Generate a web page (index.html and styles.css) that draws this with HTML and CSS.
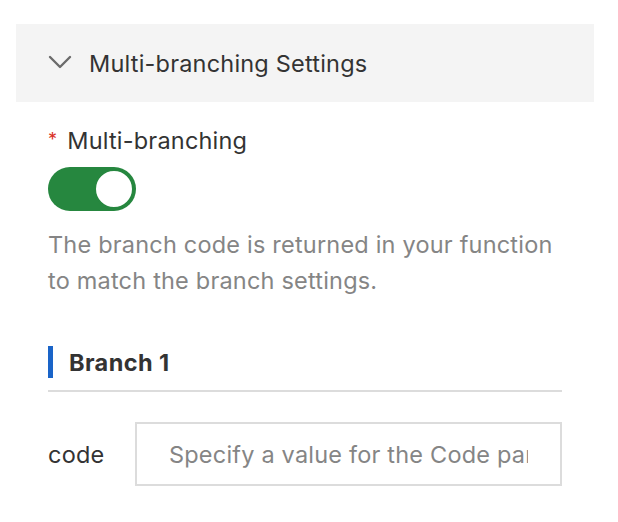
FILE: index.html
```html
<!DOCTYPE html>
<html>
<head>
<meta charset="utf-8">
<link rel="stylesheet" href="styles.css">
</head>
<body>
<div class="page">
  <div class="panel-header">
    <svg class="chevron" width="24" height="14" viewBox="0 0 24 14"><path d="M2 2 L12 12 L22 2" fill="none" stroke="#6b6b6b" stroke-width="2.4" stroke-linecap="round" stroke-linejoin="round"/></svg>
    <span class="panel-title">Multi-branching Settings</span>
  </div>
  <div class="panel-body">
    <div class="field-label"><span class="req">*</span>Multi-branching</div>
    <div class="switch"><div class="knob"></div></div>
    <p class="help">The branch code is returned in your function<br>to match the branch settings.</p>
    <div class="branch-head"><span class="bar"></span><span class="branch-title">Branch 1</span></div>
    <div class="divider"></div>
    <div class="code-row">
      <span class="code-label">code</span>
      <div class="input"><span class="placeholder">Specify a value for the Code parameter</span></div>
    </div>
  </div>
</div>
</body>
</html>
```
FILE: styles.css
```css
html, body { margin: 0; padding: 0; background: #fff; }
body { font-family: "Inter", "Roboto", "Liberation Sans", sans-serif; color: #333; letter-spacing: 0.2px; }
.page { padding: 24px 0 0 16px; width: 578px; }
.panel-header { height: 78px; background: #f4f4f4; display: flex; align-items: center; padding-left: 32px; }
.chevron { display: block; margin-right: 17px; margin-top: -2px; }
.panel-title { font-size: 23.5px; color: #333; }
.panel-body { padding: 0 32px; }
.field-label { margin-top: 24px; font-size: 23.5px; line-height: 28px; height: 28px; color: #333; }
.req { color: #d93026; margin-right: 10px; font-size: 18px; vertical-align: 3px; }
.switch { margin-top: 13px; width: 88px; height: 44px; border-radius: 22px; background: #26873f; position: relative; box-sizing: border-box; }
.knob { position: absolute; right: 2px; top: 2px; width: 40px; height: 40px; border-radius: 50%; background: #fff; box-sizing: border-box; border: 2px solid #26873f; }
.help { margin: 16px 0 0; font-size: 23.5px; line-height: 36px; color: #858585; }
.branch-head { margin-top: 47px; display: flex; align-items: center; height: 32px; }
.bar { width: 5px; height: 32px; background: #1a64c8; margin-right: 16px; }
.branch-title { font-size: 23.5px; font-weight: 700; color: #333; letter-spacing: 0.4px; }
.divider { margin-top: 12px; height: 2px; background: #dcdcdc; }
.code-row { margin-top: 30px; display: flex; align-items: center; }
.code-label { width: 87px; font-size: 23.5px; color: #333; }
.input { flex: 1; min-width: 0; height: 64px; box-sizing: border-box; border: 2px solid #dcdcdc; padding: 0 32px; display: flex; align-items: center; }
.placeholder { font-size: 23.5px; color: #858585; white-space: nowrap; overflow: hidden; min-width: 0; }
```
